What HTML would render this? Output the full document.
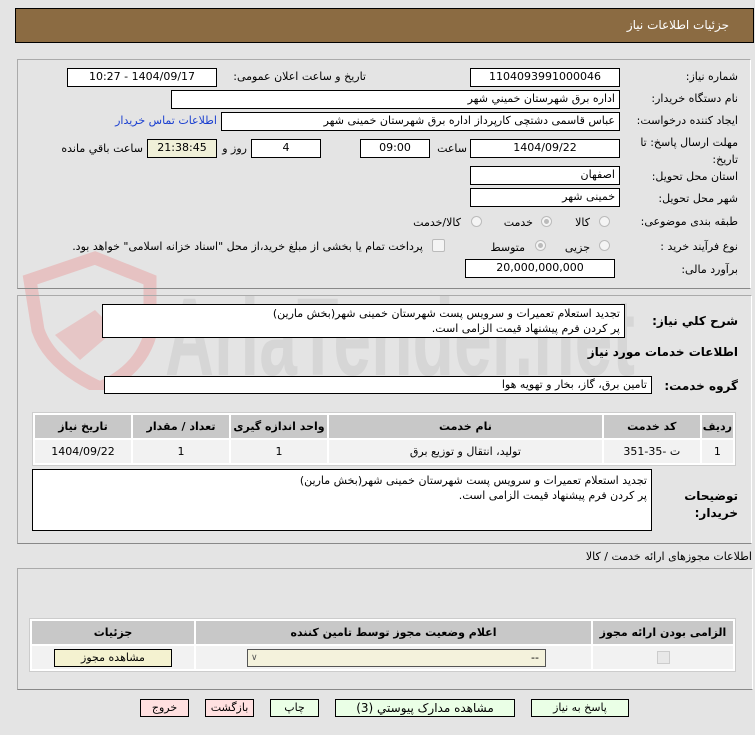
<!DOCTYPE html>
<html><head><meta charset="utf-8"><style>
body{margin:0;width:755px;height:735px;background:#e4e4e4;position:relative;overflow:hidden;font-family:"DejaVu Sans","Liberation Sans",sans-serif;font-size:11px;color:#000}
.a{position:absolute}
.l{position:absolute;direction:rtl;white-space:nowrap}
.f{position:absolute;background:#fff;border:1px solid #000;box-sizing:border-box;direction:rtl;padding:0 4px;line-height:16px;white-space:nowrap;font-size:11px}
.c{text-align:center}
.rad{position:absolute;width:11px;height:11px;border-radius:50%;border:1px solid #bbb;background:#f4f4f4;box-sizing:border-box}
.rad.on::after{content:"";position:absolute;left:2px;top:2px;width:5px;height:5px;border-radius:50%;background:#bbb}
table{border-collapse:separate;border-spacing:2px;position:absolute;background:#fff;border:1px solid #ccc}
th{background:#c8c8c8;font-weight:bold;font-size:11px;height:21px}
td{background:#f2f2f2;height:21px;text-align:center;font-size:11px}
.btn{position:absolute;height:18px;border:1px solid #000;box-sizing:border-box;text-align:center;line-height:16px;font-size:11px;background:#eaffe6}
.pk{background:#ffe0e0}
</style></head><body>
<!-- watermark -->
<svg class="a" style="left:0;top:250px" width="755" height="140">
<path d="M30 30 L95 8 L150 30 L150 85 Q140 120 100 138 Q50 115 38 80 Z" fill="none" stroke="#e6c2c2" stroke-width="13"/>
<path d="M55 85 L95 60 L115 80 L80 110 Z" fill="#e6c6c6"/>
<text x="165" y="125" font-family="Liberation Sans Narrow, Liberation Sans" font-size="110" font-weight="bold" fill="#d6d6d6" textLength="470" lengthAdjust="spacingAndGlyphs">AriaTender.net</text>
</svg>
<div class="a" style="left:15px;top:8px;width:739px;height:35px;background:#8b6b42;border:1px solid #000;box-sizing:border-box"></div>
<div class="l" style="right:26px;top:18px;color:#fff;font-size:12px">جزئیات اطلاعات نیاز</div>

<div class="a" style="left:17px;top:59px;width:734px;height:230px;border:1px solid #aaa;border-right-color:#fff;border-bottom-color:#888;box-sizing:border-box"></div>
<div class="l" style="right:17px;top:70px">شماره نیاز:</div>
<div class="f c" style="left:470px;top:68px;width:150px;height:19px">1104093991000046</div>
<div class="l" style="right:389px;top:70px">تاریخ و ساعت اعلان عمومی:</div>
<div class="f c" style="left:67px;top:68px;width:150px;height:19px">1404/09/17 - 10:27</div>
<div class="l" style="right:17px;top:92px">نام دستگاه خریدار:</div>
<div class="f" style="left:171px;top:90px;width:449px;height:19px">اداره برق شهرستان خميني شهر</div>
<div class="l" style="right:17px;top:114px">ایجاد کننده درخواست:</div>
<div class="f" style="left:221px;top:112px;width:399px;height:19px">عباس قاسمی دشتچی کارپرداز اداره برق شهرستان خمینی شهر</div>
<div class="l" style="right:538px;top:114px;color:#1a3fd0">اطلاعات تماس خریدار</div>
<div class="l" style="right:17px;top:136px">مهلت ارسال پاسخ: تا</div>
<div class="l" style="right:17px;top:153px">تاریخ:</div>
<div class="f c" style="left:470px;top:139px;width:150px;height:19px">1404/09/22</div>
<div class="l" style="right:288px;top:142px">ساعت</div>
<div class="f c" style="left:360px;top:139px;width:70px;height:19px">09:00</div>
<div class="f c" style="left:251px;top:139px;width:70px;height:19px">4</div>
<div class="l" style="right:508px;top:142px">روز و</div>
<div class="f c" style="left:147px;top:139px;width:70px;height:19px;background:#f0f0d8">21:38:45</div>
<div class="l" style="right:612px;top:142px">ساعت باقي مانده</div>
<div class="l" style="right:17px;top:170px">استان محل تحویل:</div>
<div class="f" style="left:470px;top:166px;width:150px;height:19px">اصفهان</div>
<div class="l" style="right:17px;top:192px">شهر محل تحویل:</div>
<div class="f" style="left:470px;top:188px;width:150px;height:19px">خمینی شهر</div>
<div class="l" style="right:17px;top:215px">طبقه بندی موضوعی:</div>
<div class="rad" style="left:599px;top:216px"></div><div class="l" style="right:165px;top:216px">کالا</div>
<div class="rad on" style="left:541px;top:216px"></div><div class="l" style="right:222px;top:216px">خدمت</div>
<div class="rad" style="left:471px;top:216px"></div><div class="l" style="right:294px;top:216px">کالا/خدمت</div>
<div class="l" style="right:17px;top:240px">نوع فرآیند خرید :</div>
<div class="rad" style="left:599px;top:240px"></div><div class="l" style="right:165px;top:241px">جزیی</div>
<div class="rad on" style="left:535px;top:240px"></div><div class="l" style="right:230px;top:241px">متوسط</div>
<div class="a" style="left:432px;top:239px;width:11px;height:11px;border:1px solid #bbb;background:#f4f4f4;border-radius:2px"></div>
<div class="l" style="right:332px;top:240px">پرداخت تمام یا بخشی از مبلغ خرید،از محل "اسناد خزانه اسلامی" خواهد بود.</div>
<div class="l" style="right:17px;top:263px">برآورد مالی:</div>
<div class="f c" style="left:465px;top:259px;width:150px;height:19px">20,000,000,000</div>

<div class="a" style="left:17px;top:295px;width:735px;height:249px;border:1px solid #aaa;border-right-color:#fff;border-bottom-color:#888;box-sizing:border-box"></div>
<div class="l" style="right:17px;top:314px;font-weight:bold;font-size:12px">شرح کلي نياز:</div>
<div class="f" style="left:102px;top:304px;width:523px;height:34px;line-height:15px;padding-top:1px">تجدید استعلام تعمیرات و سرویس پست شهرستان خمینی شهر(بخش مارین)<br>پر کردن فرم پیشنهاد قیمت الزامی است.</div>
<div class="l" style="right:17px;top:345px;font-weight:bold;font-size:12px">اطلاعات خدمات مورد نياز</div>
<div class="l" style="right:17px;top:379px;font-weight:bold;font-size:12px">گروه خدمت:</div>
<div class="f" style="left:104px;top:376px;width:548px;height:18px">تامین برق، گاز، بخار و تهویه هوا</div>
<table style="left:32px;top:412px;width:704px;direction:rtl">
<tr><th style="width:24px">ردیف</th><th style="width:94px">کد خدمت</th><th>نام خدمت</th><th style="width:94px">واحد اندازه گیری</th><th style="width:94px">تعداد / مقدار</th><th style="width:94px">تاریخ نیاز</th></tr>
<tr><td>1</td><td>ت -35-351</td><td>تولید، انتقال و توزیع برق</td><td>1</td><td>1</td><td>1404/09/22</td></tr>
</table>
<div class="l" style="right:17px;top:488px;font-weight:bold;font-size:12px;line-height:17px">توضیحات<br>خریدار:</div>
<div class="f" style="left:32px;top:469px;width:620px;height:62px;line-height:15px;padding-top:3px">تجدید استعلام تعمیرات و سرویس پست شهرستان خمینی شهر(بخش مارین)<br>پر کردن فرم پیشنهاد قیمت الزامی است.</div>

<div class="l" style="right:3px;top:550px">اطلاعات مجوزهای ارائه خدمت / کالا</div>
<div class="a" style="left:17px;top:568px;width:736px;height:122px;border:1px solid #aaa;border-right-color:#fff;border-bottom-color:#888;box-sizing:border-box"></div>
<table style="left:29px;top:618px;width:707px;direction:rtl">
<tr><th style="width:138px">الزامی بودن ارائه مجوز</th><th>اعلام وضعیت مجوز توسط تامین کننده</th><th style="width:160px">جزئیات</th></tr>
<tr><td><span style="display:inline-block;width:11px;height:11px;border:1px solid #ccc;background:#e8e8e8;vertical-align:middle"></span></td><td style="background:#f2f2f2"><div style="margin:0 auto 0 50px;width:299px;height:18px;border:1px solid #555;background:#f4f2dc;box-sizing:border-box;text-align:right;padding-right:6px;line-height:16px;position:relative">--<span style="position:absolute;left:3px;top:0;font-size:9px;color:#555">&#8744;</span></div></td><td><div style="width:118px;height:18px;margin:0 auto;border:1px solid #000;background:#f4f2d0;box-sizing:border-box;line-height:16px">مشاهده مجوز</div></td></tr>
</table>

<div class="btn" style="left:531px;top:699px;width:98px">پاسخ به نياز</div>
<div class="btn" style="left:335px;top:699px;width:180px;font-size:12px">مشاهده مدارک پیوستي (3)</div>
<div class="btn" style="left:270px;top:699px;width:49px">چاپ</div>
<div class="btn pk" style="left:205px;top:699px;width:49px">بازگشت</div>
<div class="btn pk" style="left:140px;top:699px;width:49px">خروج</div>
</body></html>
